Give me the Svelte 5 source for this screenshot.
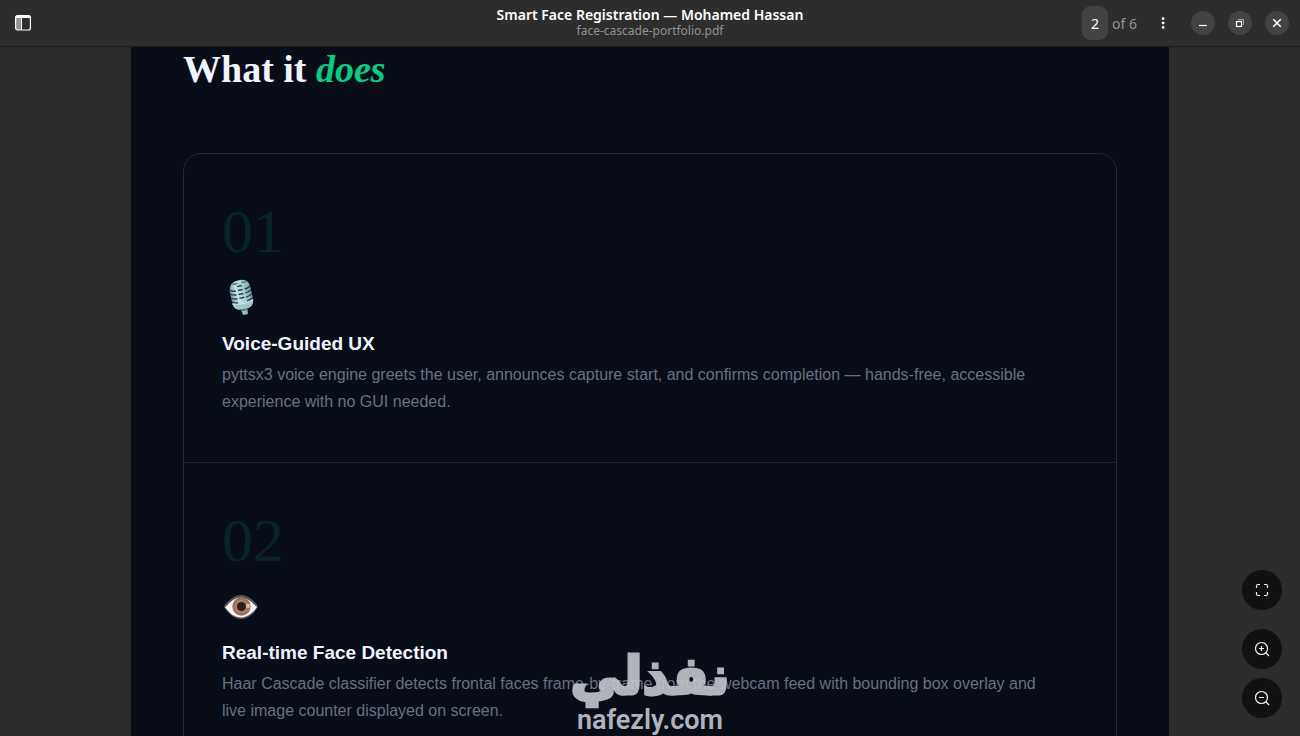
<script>
  const features = [
    {
      number: '01',
      icon: 'mic',
      title: 'Voice-Guided UX',
      text: 'pyttsx3 voice engine greets the user, announces capture start, and confirms completion — hands-free, accessible experience with no GUI needed.'
    },
    {
      number: '02',
      icon: 'eye',
      title: 'Real-time Face Detection',
      text: 'Haar Cascade classifier detects frontal faces frame-by-frame from the webcam feed with bounding box overlay and live image counter displayed on screen.'
    }
  ];
  let page = $state('2');
</script>

<div class="viewer">
  <header>
    <div class="start">
      <button class="plain" aria-label="Side pane">
        <svg width="16" height="16" viewBox="0 0 16 16">
          <rect x="1" y="1" width="6" height="14" fill="#949494" />
          <path d="M6.5 2v13" stroke="#fff" />
          <rect x=".6" y=".6" width="14.8" height="14.4" rx="2" fill="none" stroke="#fff" stroke-width="1.2" />
          <path d="M.6 3V2Q.6.6 2 .6h12q1.4 0 1.4 1.4v1z" fill="#fff" />
        </svg>
      </button>
    </div>
    <div class="titles">
      <h1>Smart Face Registration — Mohamed Hassan</h1>
      <p>face-cascade-portfolio.pdf</p>
    </div>
    <div class="end">
      <label class="pages"><input aria-label="Page" bind:value={page} /><span>of 6</span></label>
      <button class="plain menu" aria-label="Menu">
        <svg width="16" height="16" viewBox="0 0 16 16" fill="#fff">
          <rect x="6.8" y="2.3" width="2.6" height="2.6" rx=".8" /><rect x="6.8" y="6.7" width="2.6" height="2.6" rx=".8" /><rect x="6.8" y="11.1" width="2.6" height="2.6" rx=".8" />
        </svg>
      </button>
      <div class="window">
        <button class="round" aria-label="Minimize">
          <svg width="16" height="16" viewBox="0 0 16 16"><path d="M4 10.5h8" stroke="#fff" stroke-width="1.2" /></svg>
        </button>
        <button class="round" aria-label="Restore">
          <svg width="16" height="16" viewBox="0 0 16 16" fill="none"><path d="M6 4.5h5.5V10" stroke="#a8a8a8" /><rect x="4.5" y="6.5" width="5" height="5" stroke="#fff" stroke-width="1.2" /></svg>
        </button>
        <button class="round" aria-label="Close">
          <svg width="16" height="16" viewBox="0 0 16 16"><path d="M4.3 4.3l7.4 7.4M11.7 4.3l-7.4 7.4" stroke="#fff" stroke-width="1.6" /></svg>
        </button>
      </div>
    </div>
  </header>

  <main>
    <article>
      <h2>What it <em>does</em></h2>
      <div class="card">
        {#each features as feature (feature.number)}
          <section>
            <div class="number">{feature.number}</div>
            {#if feature.icon === 'mic'}
              <svg class="emoji" viewBox="0 0 38 38" aria-hidden="true">
                <defs>
                  <linearGradient id="mic-metal" x1="0" x2="1"><stop offset="0" stop-color="#779ca6" /><stop offset=".3" stop-color="#c5e5e9" /><stop offset=".65" stop-color="#a8ced3" /><stop offset="1" stop-color="#78a5ab" /></linearGradient>
                </defs>
                <g transform="rotate(-12 19 17)">
                  <path d="M16 27h7l-1 9h-5z" fill="#97bcc1" />
                  <path d="M17 31h5" stroke="#437277" stroke-width="2" />
                  <path d="M9 10Q10 1 20 1t10 9v12q0 7-6 8h-9q-6-1-6-8z" fill="url(#mic-metal)" />
                  <path d="M9 9q3 2 6 2M9 13q3 2 6 2M9 17q3 2 6 2M9 21q3 2 6 2M24 11q3 0 6-2M24 15q3 0 6-2M24 19q3 0 6-2M24 23q3 0 6-2M17 7h5M17 11h5M17 15h5M17 19h5" fill="none" stroke="#2e444c" stroke-width="1.500" />
                  <path d="M13 4h5M22 4h5" stroke="#2b8580" stroke-width="1.400" />
                  <path d="M9 23q11 4 21 0v1q-1 5-6 6h-9q-5-1-6-6z" fill="#a0c6cc" />
                  <path d="M9 23q11 4 21 0" fill="none" stroke="#d1e8eb" />
                </g>
              </svg>
            {:else}
              <svg class="emoji" viewBox="0 0 38 38" aria-hidden="true">
                <path d="M2 19C8 11 13 7 19 7s12 4 17 12c-5 8-11 12-17 12S7 27 2 19z" fill="#505961" />
                <path d="M3 19c5-7 10-10 16-10s11 3 16 10c-5 7-10 10.500-16 10.500S8 26 3 19z" fill="#f7f7f6" />
                <circle cx="19.500" cy="18.500" r="9.200" fill="#9c705a" />
                <circle cx="19.500" cy="18.500" r="7" fill="#a97d65" />
                <circle cx="19.500" cy="18.500" r="4.500" fill="#2b211f" />
                <circle cx="26" cy="18" r="2.200" fill="#d1b9ac" />
                <path d="M3 18C9 11 14 8.500 19 8.500S29 11 35 18" fill="none" stroke="#595456" stroke-width="2" />
              </svg>
            {/if}
            <h3>{feature.title}</h3>
            <p>{feature.text}</p>
          </section>
        {/each}
      </div>
    </article>
  </main>

  <div class="zoom">
    <button aria-label="Fullscreen">
      <svg width="16" height="16" viewBox="0 0 16 16"><path d="M6 2.500H4Q2.500 2.500 2.500 4v2M10 2.500h2q1.500 0 1.500 1.500v2M13.500 10v2q0 1.500-1.500 1.500h-2M6 13.500H4Q2.500 13.500 2.500 12v-2" /></svg>
    </button>
    <button class="gap" aria-label="Zoom in">
      <svg width="16" height="16" viewBox="0 0 16 16"><circle cx="7.500" cy="7.500" r="6" /><path d="M12 12l3 3M5 7.500h5M7.500 5v5" /></svg>
    </button>
    <button aria-label="Zoom out">
      <svg width="16" height="16" viewBox="0 0 16 16"><circle cx="7.500" cy="7.500" r="6" /><path d="M12 12l3 3M5 7.500h5" /></svg>
    </button>
  </div>

  <div class="watermark">
    <span class="arabic" lang="ar" dir="rtl">نفذلي</span>
    <span class="latin">nafezly.com</span>
  </div>
</div>

<style>
  :global(body) { margin: 0; background: #2c2c2c; }
  .viewer { position: relative; display: flex; flex-direction: column; height: 100vh; overflow: hidden; background: #2c2c2c; font-family: "Noto Sans", sans-serif; }
  h1, h2, h3, p { margin: 0; }
  button { display: flex; align-items: center; justify-content: center; padding: 0; border: 0; background: none; }
  header { display: grid; grid-template-columns: 1fr auto 1fr; align-items: center; height: 46px; flex: none; box-sizing: border-box; padding: 0 11px; background: #2d2d2d; box-shadow: 0 1px 1px #1c1c1c; z-index: 1; color: #fff; }
  .plain { width: 24px; height: 34px; }
  .titles { text-align: center; white-space: nowrap; }
  h1 { font: 600 14px/16px "Noto Sans", sans-serif; }
  .titles p { font-size: 12px; line-height: 16px; color: #929292; }
  .end { display: flex; align-items: center; justify-content: flex-end; }
  .pages { display: flex; align-items: center; gap: 4px; font-size: 14px; color: #939393; }
  input { width: 26px; height: 34px; box-sizing: border-box; padding: 0; border: 0; border-radius: 9px; background: #434343; color: #fff; text-align: center; font: 14px "Noto Sans", sans-serif; }
  .menu { margin: 0 16px 0 14px; }
  .window { display: flex; gap: 13px; }
  .round { width: 24px; height: 24px; border-radius: 50%; background: #434343; }
  main { flex: 1; min-height: 0; overflow: hidden; }
  article { box-sizing: border-box; max-width: 1038px; min-height: 100%; margin: 0 auto; padding: 0 52px; background: #090d18; }
  h2 { padding-bottom: 60px; font: 700 38px/47px "Liberation Serif", serif; color: #f0f4ff; }
  em { color: #0acb83; }
  .card { border: 1px solid #252932; border-radius: 18px; }
  section { padding: 38px 56px 47px 38px; }
  section + section { border-top: 1px solid #22262f; }
  .number { font: 62px/78px "Liberation Serif", serif; color: #082427; }
  .emoji { display: block; width: 38px; height: 38px; margin: 9px 0 15px; }
  h3 { font: 700 19px/24px "Liberation Sans", sans-serif; color: #f0f4ff; }
  section p { margin-top: 5px; font: 16px/27px "Liberation Sans", sans-serif; color: #687180; }
  .zoom { position: absolute; right: 18px; bottom: 18px; display: flex; flex-direction: column; gap: 9px; }
  .zoom button { width: 40px; height: 40px; border-radius: 50%; background: #111; }
  .zoom .gap { margin-top: 10px; }
  .zoom svg { fill: none; stroke: #f4f4f4; stroke-width: 1.2; }
  .watermark { position: absolute; left: 0; right: 0; bottom: 0; display: flex; flex-direction: column; align-items: center; color: #c4c6cc; opacity: .9; pointer-events: none; }
  .arabic { font: 700 52px/56px "DejaVu Sans", sans-serif; -webkit-text-stroke: 3px #c4c6cc; stroke-linejoin: round; }
  .latin { font: 600 27px/32px Roboto, sans-serif; }
</style>
